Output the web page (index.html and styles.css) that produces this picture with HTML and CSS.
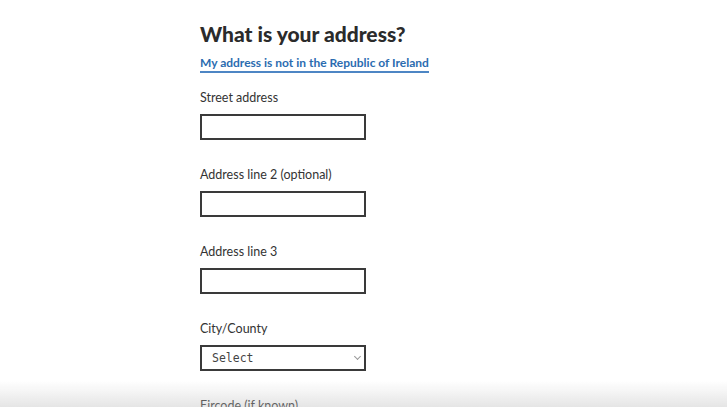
FILE: index.html
```html
<!DOCTYPE html>
<html lang="en">
<head>
    <meta charset="UTF-8">
    <meta name="viewport" content="width=device-width, initial-scale=1.0">
    <title>What is your address?</title>
    <link rel="stylesheet" href="styles.css">
</head>
<body>
    <div class="container">
        <h1>What is your address?</h1>
        <a href="#" class="switch-link">My address is not in the Republic of Ireland</a>
        <form id="address-form">
            <div class="form-group">
                <label for="street">Street address</label>
                <input type="text" id="street">
            </div>
            <div class="form-group">
                <label for="line2">Address line 2 (optional)</label>
                <input type="text" id="line2">
            </div>
            <div class="form-group">
                <label for="line3">Address line 3</label>
                <input type="text" id="line3">
            </div>
            <div class="form-group">
                <label for="county">City/County</label>
                <div class="select-wrap">
                    <select id="county">
                        <option>Select</option>
                    </select>
                </div>
            </div>
            <div class="form-group">
                <label for="eircode">Eircode (if known)</label>
                <input type="text" id="eircode">
            </div>
        </form>
    </div>
    <div class="fade"></div>
</body>
</html>
```

FILE: styles.css
```css
body {
    font-family: Lato, "Noto Sans", sans-serif;
    background-color: #fff;
    color: #2b2b2b;
    margin: 0;
}
.container {
    padding: 20px 0 0 200px;
}
h1 {
    font-size: 21px;
    font-weight: 900;
    margin: 0 0 3px;
    line-height: 28px;
    color: #2b2b2b;
}
.switch-link {
    display: inline-block;
    color: #2b6cb0;
    font-size: 12px;
    font-weight: bold;
    text-decoration: none;
    border-bottom: 2px solid #4d86c4;
    padding-bottom: 1px;
    line-height: 15px;
}
form {
    margin-top: 17px;
}
.form-group {
    margin-bottom: 27px;
}
.form-group label {
    display: block;
    font-size: 12.5px;
    line-height: 16px;
    margin-bottom: 8px;
    color: #333;
}
.form-group input,
.form-group select {
    display: block;
    box-sizing: border-box;
    width: 166px;
    height: 26px;
    border: 2px solid #3a3a3a;
    border-radius: 0;
    background: #fff;
    margin: 0;
}
.select-wrap {
    position: relative;
    width: 166px;
}
.form-group select {
    appearance: none;
    -webkit-appearance: none;
    font-family: "DejaVu Sans Mono", "Liberation Mono", monospace;
    font-size: 11.5px;
    color: #444;
    padding: 0 0 0 10px;
}
.select-wrap::after {
    content: "";
    position: absolute;
    right: 6px;
    top: 9px;
    width: 4px;
    height: 4px;
    border-right: 1px solid #999;
    border-bottom: 1px solid #999;
    transform: rotate(45deg);
}
.fade {
    position: fixed;
    left: 0;
    right: 0;
    bottom: 0;
    height: 26px;
    background: linear-gradient(to bottom, rgba(190, 190, 190, 0), rgba(190, 190, 190, 0.4));
    pointer-events: none;
}
```
